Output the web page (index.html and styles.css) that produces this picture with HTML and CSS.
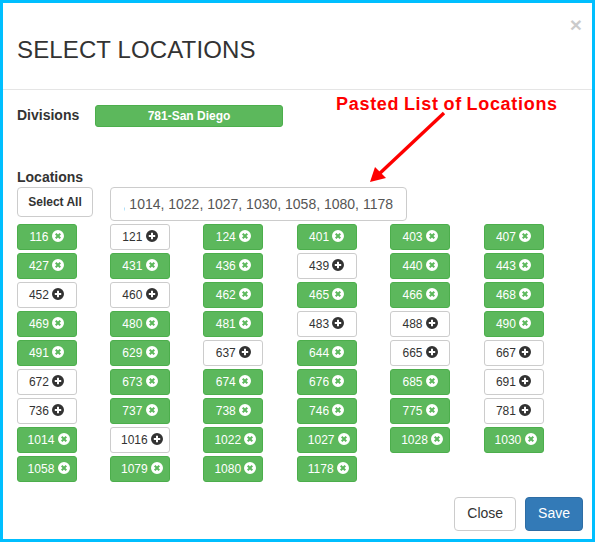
FILE: index.html
```html
<!DOCTYPE html>
<html lang="en">
    <head>
        <meta charset="UTF-8" />
        <title>Select Locations</title>
        <link rel="stylesheet" href="styles.css">
    </head>
    <body>
        <!-- chip icons -->
        <svg class="sprite" aria-hidden="true">
            <symbol id="ic-remove" viewBox="0 0 12 12">
                <path fill-rule="evenodd" d="M6 0a6 6 0 1 0 0 12a6 6 0 1 0 0-12zM4.4 3L6 4.6L7.6 3L9 4.4L7.4 6L9 7.6L7.6 9L6 7.4L4.4 9L3 7.6L4.6 6L3 4.4z"/>
            </symbol>
            <symbol id="ic-plus" viewBox="0 0 12 12">
                <path fill-rule="evenodd" d="M6 0a6 6 0 1 0 0 12a6 6 0 1 0 0-12zM5 2.8h2v2.2h2.2v2h-2.2v2.2h-2v-2.2h-2.2v-2h2.2z"/>
            </symbol>
        </svg>

        <div class="modal">
            <div class="modalHead">
                <h4 class="modalTitle">SELECT LOCATIONS</h4>
                <span class="closeX">×</span>
            </div>

            <div class="modalBody">
                <div class="divRow">
                    <label class="fieldLabel">Divisions</label>
                    <div class="divChip">781-San Diego</div>
                </div>

                <label class="fieldLabel locLabel">Locations</label>
                <div class="pasteRow">
                    <button class="btn selectAll">Select All</button>
                    <div class="pasteBox">
                        <div class="pasteText">781, 1014, 1022, 1027, 1030, 1058, 1080, 1178</div>
                    </div>
                </div>

                <div class="chips">
                    <button class="chip on">116 <svg class="ic"><use href="#ic-remove"/></svg></button>
                    <button class="chip">121 <svg class="ic"><use href="#ic-plus"/></svg></button>
                    <button class="chip on">124 <svg class="ic"><use href="#ic-remove"/></svg></button>
                    <button class="chip on">401 <svg class="ic"><use href="#ic-remove"/></svg></button>
                    <button class="chip on">403 <svg class="ic"><use href="#ic-remove"/></svg></button>
                    <button class="chip on">407 <svg class="ic"><use href="#ic-remove"/></svg></button>

                    <button class="chip on">427 <svg class="ic"><use href="#ic-remove"/></svg></button>
                    <button class="chip on">431 <svg class="ic"><use href="#ic-remove"/></svg></button>
                    <button class="chip on">436 <svg class="ic"><use href="#ic-remove"/></svg></button>
                    <button class="chip">439 <svg class="ic"><use href="#ic-plus"/></svg></button>
                    <button class="chip on">440 <svg class="ic"><use href="#ic-remove"/></svg></button>
                    <button class="chip on">443 <svg class="ic"><use href="#ic-remove"/></svg></button>

                    <button class="chip">452 <svg class="ic"><use href="#ic-plus"/></svg></button>
                    <button class="chip">460 <svg class="ic"><use href="#ic-plus"/></svg></button>
                    <button class="chip on">462 <svg class="ic"><use href="#ic-remove"/></svg></button>
                    <button class="chip on">465 <svg class="ic"><use href="#ic-remove"/></svg></button>
                    <button class="chip on">466 <svg class="ic"><use href="#ic-remove"/></svg></button>
                    <button class="chip on">468 <svg class="ic"><use href="#ic-remove"/></svg></button>

                    <button class="chip on">469 <svg class="ic"><use href="#ic-remove"/></svg></button>
                    <button class="chip on">480 <svg class="ic"><use href="#ic-remove"/></svg></button>
                    <button class="chip on">481 <svg class="ic"><use href="#ic-remove"/></svg></button>
                    <button class="chip">483 <svg class="ic"><use href="#ic-plus"/></svg></button>
                    <button class="chip">488 <svg class="ic"><use href="#ic-plus"/></svg></button>
                    <button class="chip on">490 <svg class="ic"><use href="#ic-remove"/></svg></button>

                    <button class="chip on">491 <svg class="ic"><use href="#ic-remove"/></svg></button>
                    <button class="chip on">629 <svg class="ic"><use href="#ic-remove"/></svg></button>
                    <button class="chip">637 <svg class="ic"><use href="#ic-plus"/></svg></button>
                    <button class="chip on">644 <svg class="ic"><use href="#ic-remove"/></svg></button>
                    <button class="chip">665 <svg class="ic"><use href="#ic-plus"/></svg></button>
                    <button class="chip">667 <svg class="ic"><use href="#ic-plus"/></svg></button>

                    <button class="chip">672 <svg class="ic"><use href="#ic-plus"/></svg></button>
                    <button class="chip on">673 <svg class="ic"><use href="#ic-remove"/></svg></button>
                    <button class="chip on">674 <svg class="ic"><use href="#ic-remove"/></svg></button>
                    <button class="chip on">676 <svg class="ic"><use href="#ic-remove"/></svg></button>
                    <button class="chip on">685 <svg class="ic"><use href="#ic-remove"/></svg></button>
                    <button class="chip">691 <svg class="ic"><use href="#ic-plus"/></svg></button>

                    <button class="chip">736 <svg class="ic"><use href="#ic-plus"/></svg></button>
                    <button class="chip on">737 <svg class="ic"><use href="#ic-remove"/></svg></button>
                    <button class="chip on">738 <svg class="ic"><use href="#ic-remove"/></svg></button>
                    <button class="chip on">746 <svg class="ic"><use href="#ic-remove"/></svg></button>
                    <button class="chip on">775 <svg class="ic"><use href="#ic-remove"/></svg></button>
                    <button class="chip">781 <svg class="ic"><use href="#ic-plus"/></svg></button>

                    <button class="chip on">1014 <svg class="ic"><use href="#ic-remove"/></svg></button>
                    <button class="chip">1016 <svg class="ic"><use href="#ic-plus"/></svg></button>
                    <button class="chip on">1022 <svg class="ic"><use href="#ic-remove"/></svg></button>
                    <button class="chip on">1027 <svg class="ic"><use href="#ic-remove"/></svg></button>
                    <button class="chip on">1028 <svg class="ic"><use href="#ic-remove"/></svg></button>
                    <button class="chip on">1030 <svg class="ic"><use href="#ic-remove"/></svg></button>

                    <button class="chip on">1058 <svg class="ic"><use href="#ic-remove"/></svg></button>
                    <button class="chip on">1079 <svg class="ic"><use href="#ic-remove"/></svg></button>
                    <button class="chip on">1080 <svg class="ic"><use href="#ic-remove"/></svg></button>
                    <button class="chip on">1178 <svg class="ic"><use href="#ic-remove"/></svg></button>
                </div>
            </div>

            <div class="modalFoot">
                <button class="btn footBtn">Close</button>
                <button class="btn footBtn save">Save</button>
            </div>

            <!-- red annotation over the modal -->
            <div class="note">Pasted List of Locations</div>
            <svg class="noteArrow" viewBox="0 0 595 542">
                <path d="M444 113L378 175" stroke="#fe0000" stroke-width="3.4" fill="none"/>
                <path d="M370 182L375 167L386 178z" fill="#fe0000"/>
            </svg>
        </div>
    </body>
</html>
```

FILE: styles.css
```css
* {
    box-sizing: border-box;
}

body {
    margin: 0;
    font-family: "Liberation Sans", Arial, sans-serif;
    color: #333;
}

.sprite {
    display: none;
}

/* modal window */
.modal {
    position: relative;
    display: flex;
    flex-direction: column;
    width: 595px;
    height: 542px;
    border: 3px solid #00bfff;
    background-color: #fff;
}

.modalHead {
    display: flex;
    justify-content: space-between;
    flex: none;
    height: 87px;
    padding: 11px 10px 0 14px;
    border-bottom: 1px solid #e5e5e5;
}

.modalTitle {
    margin: 23px 0 0;
    font-size: 24px;
    font-weight: normal;
    line-height: 26px;
    letter-spacing: 0.13px;
}

.closeX {
    font-size: 21px;
    font-weight: bold;
    line-height: 21px;
    color: #000;
    opacity: 0.2;
}

.modalBody {
    flex: 1;
    padding: 15px 14px 0;
}

.fieldLabel {
    display: block;
    font-size: 14px;
    font-weight: bold;
    line-height: 20px;
}

.divRow {
    display: flex;
    height: 22px;
}

.divRow .fieldLabel {
    width: 78px;
}

.divChip {
    width: 188px;
    height: 22px;
    border: 1px solid #4cae4c;
    border-radius: 3px;
    background-color: #5cb85c;
    color: #fff;
    font-size: 12px;
    font-weight: bold;
    line-height: 20px;
    text-align: center;
}

.locLabel {
    margin-top: 40px;
}

/* select all + pasted list */
.pasteRow {
    display: flex;
    height: 34px;
    margin-bottom: 3px;
}

.btn {
    border: 1px solid #ccc;
    border-radius: 4px;
    background-color: #fff;
    color: #333;
    font-family: inherit;
}

.selectAll {
    width: 76px;
    height: 30px;
    margin-right: 17px;
    padding: 0;
    font-size: 12px;
    font-weight: bold;
}

.pasteBox {
    display: flex;
    width: 297px;
    padding: 0 13px 0 12.5px;
    border: 1px solid #ccc;
    border-radius: 4px;
    color: #555;
    font-size: 14px;
    line-height: 32px;
}

.pasteText {
    flex: 1;
    display: flex;
    justify-content: flex-end;
    min-width: 0;
    overflow: hidden;
    white-space: nowrap;
}

/* location chips */
.chips {
    display: grid;
    grid-template-columns: repeat(6, 93.4px);
    row-gap: 3px;
    margin-left: -0.4px;
}

.chip {
    width: 60px;
    height: 26px;
    padding: 0 10px;
    border: 1px solid #ccc;
    border-radius: 3px;
    background-color: #fff;
    color: #333;
    font-family: inherit;
    font-size: 12px;
    line-height: 24px;
    white-space: nowrap;
}

.chip.on {
    border-color: #4cae4c;
    background-color: #5cb85c;
    color: #fff;
}

.ic {
    width: 12px;
    height: 12px;
    fill: currentColor;
    vertical-align: -1px;
}

.modalFoot {
    display: flex;
    justify-content: flex-end;
    flex: none;
    gap: 9px;
    padding: 0 9px 8px 0;
}

.footBtn {
    height: 34px;
    padding: 0 12px 2px;
    font-size: 14px;
}

.save {
    border-color: #2e6da4;
    background-color: #337ab7;
    color: #fff;
}

/* annotation */
.note {
    position: absolute;
    top: 91px;
    left: 333px;
    color: #fe0000;
    font-size: 18px;
    font-weight: bold;
    letter-spacing: 0.7px;
    word-spacing: -1px;
    white-space: nowrap;
}

.noteArrow {
    position: absolute;
    top: -3px;
    left: -3px;
    width: 595px;
    height: 542px;
    pointer-events: none;
}
```
